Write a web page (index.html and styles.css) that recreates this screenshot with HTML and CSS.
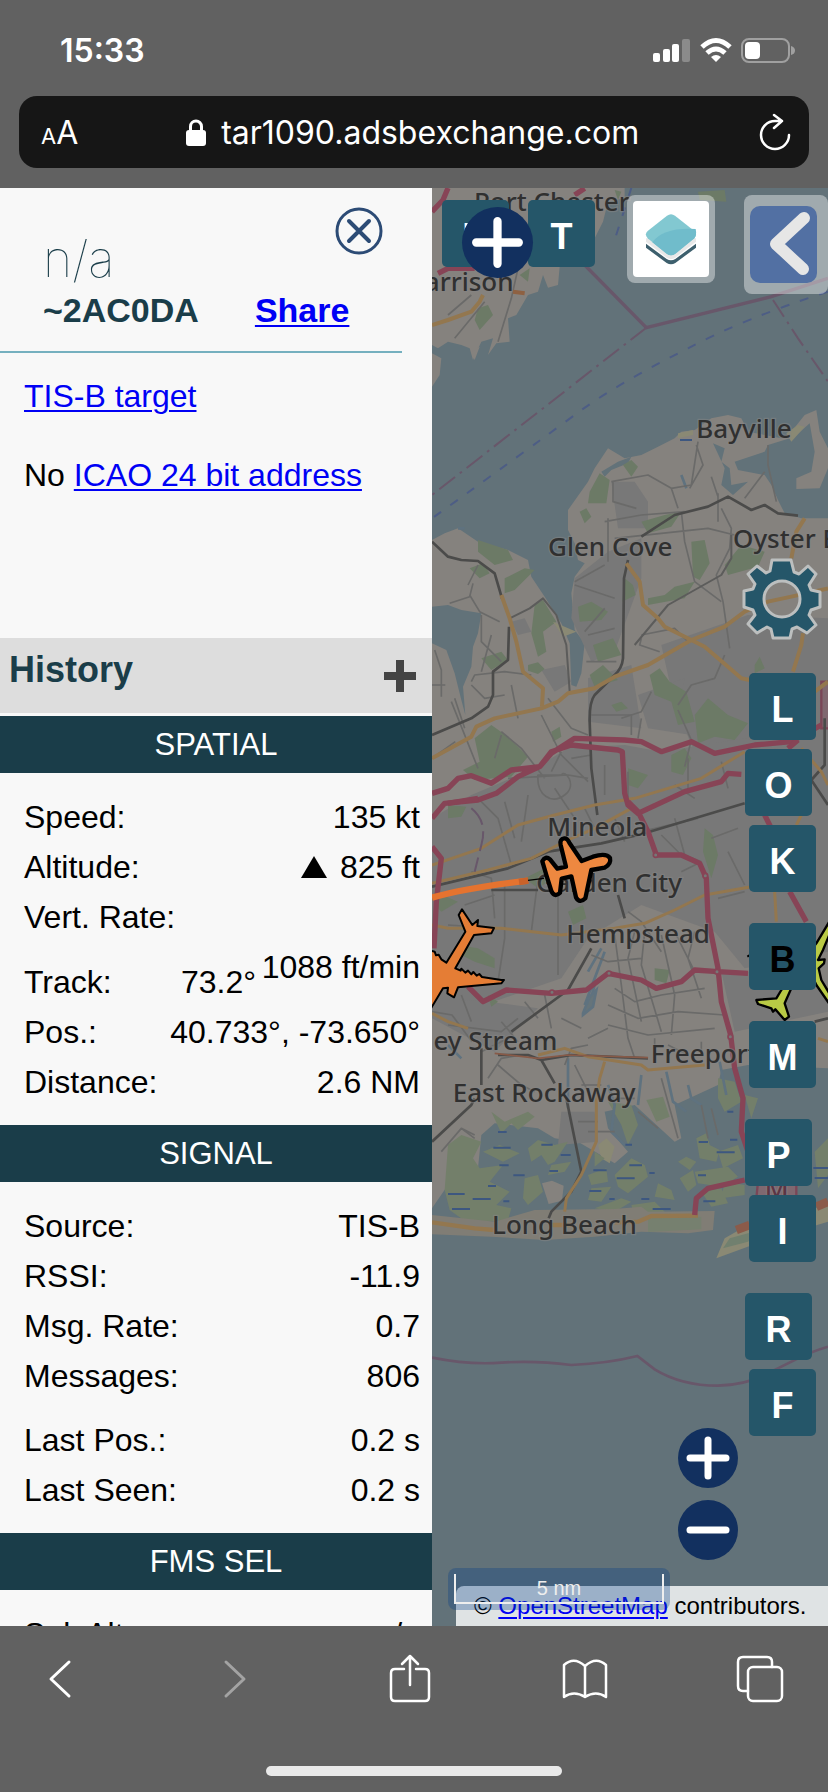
FILE: index.html
```html
<!DOCTYPE html>
<html lang="en">
<head>
<meta charset="utf-8">
<meta name="viewport" content="width=device-width, initial-scale=1">
<title>tar1090.adsbexchange.com</title>
<link rel="stylesheet" href="styles.css">
</head>
<body>
<header class="chrome-top">
  <div class="status">
    <time class="clock">15:33</time>
    <svg class="status-icons" viewBox="0 0 144 28" aria-hidden="true">
      <g fill="#fff">
        <rect x="1" y="17" width="7" height="9" rx="2"/>
        <rect x="11" y="13" width="7" height="13" rx="2"/>
        <rect x="20" y="8" width="7" height="18" rx="2"/>
        <rect x="30" y="3" width="8" height="23" rx="2" fill="#8b8b8b"/>
        <path d="M64 26l-5-5q5-4 10 0z"/>
      </g>
      <g fill="none" stroke="#fff" stroke-width="5">
        <path d="M50 11q14-13 28 0"/>
        <path d="M55 17q9-8 18 0"/>
      </g>
      <rect x="90" y="3" width="47" height="23" rx="7" fill="none" stroke="#a0a0a0" stroke-width="2"/>
      <rect x="93" y="6" width="15" height="17" rx="4" fill="#fff"/>
      <path d="M139 10q4 1 4 4.500t-4 4.500z" fill="#a0a0a0"/>
    </svg>
  </div>
  <div class="address-bar">
    <button class="bar-button text-size" aria-label="Text size"><small>A</small>A</button>
    <label class="address">
      <svg class="lock" viewBox="0 0 20 27" aria-label="Secure"><rect y="11" width="20" height="16" rx="3" fill="#fff"/><path d="M4.500 13V7.500a5.500 5.500 0 0 1 11 0V13" fill="none" stroke="#fff" stroke-width="3"/></svg>
      <input class="url" type="text" value="tar1090.adsbexchange.com" aria-label="Address">
    </label>
    <button class="bar-button" aria-label="Reload">
      <svg class="reload" viewBox="0 0 32 38" fill="none" stroke="#fff" stroke-width="2.500" stroke-linecap="round" stroke-linejoin="round"><path d="M30 22A14 14 0 1 1 16 8h7M15 2l8 6-8 7"/></svg>
    </button>
  </div>
</header>

<main class="content">
  <aside class="panel">
    <div class="ident">
      <h1 class="callsign">n/a</h1>
      <button class="close" aria-label="Close">
        <svg viewBox="0 0 48 48" fill="none" stroke="#2c4b75" stroke-width="3" stroke-linecap="round"><circle cx="24" cy="24" r="22"/><path d="M14 14l20 20M34 14L14 34" stroke-width="4"/></svg>
      </button>
      <div class="hex-row"><span class="hex">~2AC0DA</span><a class="share" href="#share">Share</a></div>
    </div>
    <div class="about">
      <p><a href="#tisb">TIS-B target</a></p>
      <p>No <a href="#icao">ICAO 24 bit address</a></p>
    </div>
    <div class="history">
      <h2>History</h2>
      <button class="expand" aria-label="Expand history"><svg viewBox="0 0 32 32"><path d="M16 0v32M0 16h32" stroke="#444" stroke-width="8"/></svg></button>
    </div>

    <h3 class="section-title">SPATIAL</h3>
    <dl class="facts">
      <div><dt>Speed:</dt><dd>135 kt</dd></div>
      <div><dt>Altitude:</dt><dd class="altitude"><svg class="climb" viewBox="0 0 26 22" aria-label="climbing"><path d="M13 0l13 22H0z"/></svg>825 ft</dd></div>
      <div class="vert-rate"><dt>Vert. Rate:</dt><dd>1088 ft/min</dd></div>
      <div class="track"><dt>Track:</dt><dd>73.2°</dd></div>
      <div><dt>Pos.:</dt><dd>40.733°, -73.650°</dd></div>
      <div><dt>Distance:</dt><dd>2.6 NM</dd></div>
    </dl>

    <h3 class="section-title">SIGNAL</h3>
    <dl class="facts">
      <div><dt>Source:</dt><dd>TIS-B</dd></div>
      <div><dt>RSSI:</dt><dd>-11.9</dd></div>
      <div><dt>Msg. Rate:</dt><dd>0.7</dd></div>
      <div><dt>Messages:</dt><dd>806</dd></div>
      <div class="spaced"><dt>Last Pos.:</dt><dd>0.2 s</dd></div>
      <div><dt>Last Seen:</dt><dd>0.2 s</dd></div>
    </dl>

    <h3 class="section-title">FMS SEL</h3>
    <dl class="facts">
      <div><dt>Sel. Alt.:</dt><dd>n/a</dd></div>
    </dl>
  </aside>

  <section class="map" aria-label="Map">
    <svg class="tiles" viewBox="12 9 1188 4314" preserveAspectRatio="xMinYMin slice">
      <rect x="12" y="9" width="1188" height="4314" fill="#627279"/>

      <!-- land -->
      <g fill="#85827e">
        <path d="M12 9H590V40L540 50 525 110 500 160 470 245 395 245 390 300 360 308 345 270 330 320 300 330 265 390 240 400 245 470 205 475 180 510 195 460 160 470 135 525 125 490 100 480 60 470 30 490 12 480Z"/>
        <path d="M12 505L40 520 35 570 12 605ZM130 500l25-15-15 40z"/>
        <path d="M12 1065L50 1045 90 1030 150 1070 240 1095 300 1125 310 1175 350 1235 400 1315 425 1375 430 1500 445 1505 460 1465 470 1375 440 1335 430 1225 440 1175 470 1135 450 1125 440 1075 420 1035 420 975 480 890 500 850 540 790 590 820 640 810 690 785 740 760 760 740 800 735 850 700 900 690 940 700 960 740 1060 760 1090 740 1130 690 1165 675 1175 740 1200 790V850L1175 910 1105 912 1105 880 1150 860 1160 800 1145 715 1100 755 1020 780 1010 800 920 830 930 855 1010 870 1030 900 1050 945 1070 985 1120 1000 1200 1000V2650L960 2640 880 2655 870 2700 740 2760 760 2860 740 2870 620 2760 530 2780 540 2830 600 2900 560 2935 450 2870 380 2860 330 2830 200 2815 160 2850 150 2950 60 3000 12 3070Z"/>
      </g>
      <g fill="#627279">
        <path d="M12 1265L60 1260 100 1275 160 1285 150 1345 135 1385 130 1445 105 1505 112 1590 100 1545 80 1465 55 1395 12 1375Z"/>
        <path d="M855 775L890 790 880 830 905 850 910 900 960 890 915 930 880 900 890 850ZM520 860l50-30 40-15-10 20-50 20-20 20z"/>
      </g>

      <!-- built-up areas -->
      <g fill="#787878">
        <path d="M540 1100L640 1060 640 1180 560 1400 490 1430 430 1300 440 1180ZM550 890h70l40 60v80h-90zM700 1380L960 1290 1200 1300 1200 1800 1000 1850 820 1750 740 1560Z"/>
        <path d="M12 1900L130 1830 320 1750 420 1690 590 1680 700 1700 950 1660 1200 1740V2300L950 2350 860 2240 640 2160 480 2260 400 2380 140 2470 12 2440Z"/>
        <path d="M12 2440L180 2450 330 2470 200 2600 12 2500ZM400 2780h100l10 90-120 10zM480 1480l130-40 30 190-160-20zM630 1530l140-50-20 110 40 60-130-20zM880 2360h140l180 60v60l-280 60z"/>
        <path d="M340 1455l70-15 20 50-50 30zM250 1310l40-10 20 40-40 10z"/>
      </g>

      <!-- parks -->
      <g fill="#6c7a66">
        <path d="M150 1065l90 30 15 30-55 15-50-40zM125 1150l40-15 20 30-30 15zM230 1180l60-30 30 5-60 60-30 10zM320 1260l25-15 40 65-40 30 10 60-25 15-20-70zM160 1420l60-20 20 25-50 30zM300 1440l30-8 20 20-20 15-30-10zM485 920l30-55 30 20-10 70h-55zM585 840l25-15 20 20-20 30zM590 1180l25 20 8 30-40 20zM660 1240l50-10 30-25 60-15-30 50-110 20zM890 1140l50-60 70 20-20 45-90 25zM790 1070l40-5 15 70-30 50-20-10zM640 1010l70-20 50-10-30 45-70 20zM450 1265l40-15 50 30-20 25-65 5zM495 1380l60-20 25 50-70 20zM485 1470l40-30 45 45-70 20z"/>
        <path d="M665 1470l30-20 30 40 50 30 25 90-50 10-20-70-50-20zM800 1590l40-50 60 50 60 25-40 50-60-10-50 20zM140 1660l50-40 50 35 60 60-50 60-110 10-35-30 50-25zM370 1640l25-15 5 30-25 15zM550 1560l30-10 20 20-35 10zM980 1440l15-25 15 35-30 15zM600 1750l60 20-30 40-30-10zM730 1710l40-20 20 30-25 50-35-10z"/>
        <path d="M90 2280l60 10 50 30v30l-60-20-40-20zM420 2180l45-20 10 40-40 20zM680 2350l45 5-10 40-35-10zM180 2430l30 20-20 15zM830 1930l25 20 15 60-20 70-25-80zM20 2120l70 30-50 30-20-20zM1010 2650l70 5 10 40-40 10zM290 2080l60-30 10 40-30 20zM60 1860l55 5-15 30-40 5z"/>
        <path d="M560 15l20 5-10 25zM810 20l80-5 5 35-80-5zM150 370l30-10 15 30-40 45-15-30zM275 270l30-20-5 40zM455 980l20-10 15 25-20 20z"/>
      </g>
      <g fill="#8a8974">
        <path d="M750 745l45-10v15l-45 10zM1075 745l35-25 20 5-40 45zM375 1310l70 30-40 15zM510 2880l25-20 25 25-15 50-25-15z"/>
      </g>

      <!-- salt marsh -->
      <g fill="#737f6a">
        <path d="M60 2880l40-30 60 20-25 50 20 30 70-10-40 50 60 30-40 40 45 10-10 35-120 10-55-40-15-60z"/>
        <path d="M190 2780l40 30 70-30 20 15-50 40-20-20-30 30zM300 2890l30-25 50 15 40-10-40 60-20 10-20-30-30 20zM290 2980l40-10 15 50-45 40-15-20zM165 2900l50-20 60 25-50 25zM500 2900l30 20-30 25zM370 2940l60-10-20 30-50 10zM480 2970l55-20 5 40-50 10zM560 2970l50-50 40 20 10 35-60 50-30-20zM490 3010l60-5-30 45-40-5zM500 3070l80-30 30 10-50 30zM610 3060l70-10 60 60-40-10-80-5zM750 2930l25-15 30 15-20 25zM755 2980l40-25 10 45-25 20zM805 2860l30-15 10 35 30 15-10 35-50-10zM870 2900l60-20 15 40-60 30zM800 2960l100-15 30 30-50 30-70-10zM820 3020l60-10 20 45-50 10zM690 2995l40 20 10 30-60-10zM540 2750l70 10 20 60-30 60-20-60zM655 2745l50-10 20 60-40 15zM870 2680l50 10 20 60-50 30-20-40zM1160 2900l40-40v110l-30 40zM950 2730l40 10-20 60zM890 2990l60 10v30l-70 10z"/>
      </g>
      <g stroke="#3d5780" stroke-width="6">
        <path d="M210 2841h26M196 2888h52M340 2879h34M398 2910h30M214 2941h28M180 3003h24M256 2971h34M60 3027h50M134 3042h54M226 3049h18M72 3072h54M364 2958h26M496 2956h40M484 3018h36M604 2941h38M566 2980h54M592 2879h20M544 3042h16M640 3042h24M674 3072h54M812 2871h28M866 2902h54M826 3049h36M810 2971h24M906 2864h22M664 2964h16M1156 2949h44M1160 2979h40M756 765h36M898 2780h18"/>
      </g>

      <!-- barrier beach -->
      <path d="M12 3090L200 3110 320 3075 560 3072 640 3065 660 3080 860 3078 855 3135 780 3145 640 3140 500 3155 350 3165 190 3155 12 3148Z" fill="#807d75"/>
      <path d="M660 3100l160-5v38l-160 8z" fill="#76806f"/>
      <path d="M342 2995l30-8 35 15-5 45-40 10z" fill="#85827e"/>
      <path d="M865 3220L890 3160 960 3120 1200 3060V3110L1000 3170Z" fill="#8a8974"/>
      <path d="M885 3190L905 3160 960 3145 1000 3140 960 3170Z" fill="#71806f"/>
      <path d="M990 2990h115v50H985z" fill="#806870" stroke="#7a4657" stroke-width="7"/>
      <path d="M1180 1490h40v140h-40z" fill="#806870" stroke="#7a4657" stroke-width="7"/>

      <!-- creeks -->
      <g fill="none" stroke="#5f727f" stroke-width="8">
        <path d="M520 2290l-40 70M500 2400l-20 70M530 2300l-60 160M420 2620v150M640 2670l-10 90M715 2660l20 90 40 30M780 2700l10 40 30 20M875 2630l20 100M60 2580l40 40M540 2700l20 60-10 80 40 40M760 870l15 40M110 1030h-20"/>
        <path d="M465 2485l20-50 20-20-10 50-30 25z" fill="#66747a"/>
      </g>

      <!-- streets -->
      <g fill="none" stroke="#6a6a69" stroke-width="5" stroke-linejoin="round">
        <path d="M550 890l110-20 70 40 20 60M555 890v60l70 20M730 910l60-10 20-130M805 780l20 60-40 70M1020 780v60l25 110M950 940l60-80M80 460l90-110M210 470l40-130 20-90M60 390l70-60M870 935l-20-60M870 925v85"/>
        <path d="M540 1000v130M530 1010l110-20 130-10M560 1060l280-30 80 20M760 980l10 90 30 120 80 60M880 970l30 60-5 60-40 80 20 80 20 140M440 1190l90-50M440 1200l120 40M470 1340l60-70M480 1350l80-20M475 1430h90M120 1200l30-60M125 1230l30 50 60 30M65 1255l60-20 10-40M160 1290v80l60 60M190 1350l-30 110M130 1490l10-20 90-10 80 10M130 1500l40 40 60-10M640 1350l100-20 40 40M640 1360l-5 20 60 20M750 1575l40 90-20 80M750 1560l40-60 70-20 30-70M580 1600l60-20 30-60M20 1395l20 60v80M12 1500h40M80 1540l30 90M70 1550l80 200"/>
        <path d="M250 1500l20 100M340 1590l60 120 80 80M360 1540l70 90 50 20M220 1640l60 50 70 90M12 1720l70-50M200 1720l20-70M240 1780l180-10 60 10M330 1770c-5 60 40 90 80 60s0-80-10-60zM490 1590h120v60M600 1760v80M530 1740v90M740 1800l60 40M780 1720v100M880 1730l20 80M640 1600l-10 60M400 1700l-30 60M430 1720l60-10"/>
        <path d="M150 1840l60 60 40 140M230 1850l30 110M300 1830l-20 140M380 1810l60 90M130 2060l60 20 10 120M230 2100v160l-20 130M330 2080l-20 160M390 2070v300M60 2220l150 10M110 2160l90-30M470 1870l30 60M560 1900l30 70M700 1950l60 60M740 1900l30 110 50 20M760 2060l60-30M640 1940l170-40M850 1960l80-30M870 2140l80-20M900 2000l50 100"/>
        <path d="M600 2180l40 30 60 90M560 2250l20 150 20 160M620 2240l-20 80 40 190M650 2240l-10 100 60 200M700 2250l40 180-10 120M740 2240l60 120M800 2240l-20 80 40 120M560 2410l60 40 80-20 130-20M540 2460l90 40 120-20 140 10M540 2520l120 30 200-20M480 2560l60-30M600 2560l20 60M680 2560v50M720 2580l60 30M820 2570v40M490 2310l50 20 100-10M100 2430l30 80M12 2480l60 10 60 80M220 2510l50 60M290 2450l40 50M350 2430l20 100M60 2520l160 20 50-40M400 2500l60 30M410 2640l20-50 50-10M160 2600l80-40M180 2680l40-60 60-10M210 2640l70 60 40 20M440 2640l40 80M460 2700h60M560 2740h60M700 2680l50 180M630 2780l60 50M820 2760l20 100M850 2770l20 80M450 2810h60M480 2840h80M40 2900l60-70 40 20M100 2830l40 30"/>
      </g>

      <!-- railways -->
      <g fill="none" stroke="#4b4b4a" stroke-width="8" stroke-linejoin="round">
        <path d="M12 1650L130 1600 180 1565 195 1530 195 1460 240 1425 243 1325M12 1070L60 1115 100 1125 150 1128 200 1165 222 1240M600 1125L588 1180 585 1420Q582 1450 560 1470L500 1530Q484 1550 485 1610L490 1750 508 1890M640 1055L740 990 840 965 900 935 970 975 1010 960 1050 985 1110 992"/>
        <path d="M12 2105L240 2050 360 2000 520 1975 650 1945 950 1855M250 2540L420 2415 490 2290M570 2130l20 70M160 2590v110M210 2610h90l40 15 90-15 230 10M340 2625l40 70M415 2740L460 2960 430 3020 370 3080 362 3100M12 2870L130 2760 140 2740M190 2115h140"/>
        <path d="M245 1300l60-30 40-30 40 50 30 90 10 140M620 1380l100-120 160-90 30-50V1050" stroke-width="6" stroke="#5c5c5b"/>
        <path d="M1200 2500L1160 2510M1190 1600V1740L1150 1785 1200 1860"/>
      </g>

      <!-- main roads -->
      <g fill="none" stroke="#93774f" stroke-width="12" stroke-linejoin="round">
        <path d="M12 420L60 405 130 380 155 350 165 330M12 1720L130 1655 145 1625 200 1600 340 1570 390 1550 420 1525 500 1510 560 1475 660 1440 790 1365 890 1325 950 1280 1020 1250 1090 1235 1200 1210M220 1230L245 1300 265 1370 285 1460 345 1510 342 1565M595 1135L635 1190 645 1260 690 1300 710 1325 790 1365 830 1385 940 1480 965 1485M1130 1000L1105 1040 1090 1120M1125 1345L1120 1380 1095 1460M1200 1490L1160 1520"/>
        <path d="M12 2040L160 1990 270 1920 380 1890 500 1860 620 1840 820 1780 950 1700M12 2095L180 2055 310 2020 420 1965 500 1930 610 1870M12 2220L60 2230 220 2230 400 2250 560 2230 650 2215 740 2175 830 2130 1000 2100M1120 1890L1105 1920M1040 2120L1045 2210M1120 1690l60 70 20 40M12 2485L60 2510 120 2530M330 2610L410 2590 480 2615 640 2640 660 2655 830 2640M530 2630L515 2680 505 2750 505 2870 460 2970 415 3040 410 3080M1170 2560l30 10" stroke-width="9"/>
        <path d="M12 3112L140 3130 200 3135M560 3112L630 3110 670 3093 810 3092M370 3120h60" stroke-width="13"/>
        <path d="M255 320L290 325" stroke="#8e6142"/>
        <path d="M200 2605l130 15 90-10 240 8" stroke="#875a48" stroke-width="5"/>
        <path d="M925 3135L965 3120M1165 3065L1200 3050" stroke="#8b5b4a" stroke-width="26"/>
      </g>

      <!-- motorways -->
      <g fill="none" stroke="#874456" stroke-width="16" stroke-linejoin="round">
        <path d="M12 80L45 45 60 9M30 265L60 250 140 250M440 30l30-20M12 1825L60 1810 90 1780 130 1772 190 1795 250 1755 335 1745 370 1705 440 1660 590 1665 640 1670 700 1700 790 1670 860 1705 980 1680 1090 1670 1180 1620M12 1900L50 1855 150 1845 205 1825 270 1775 335 1745 370 1700 430 1680 570 1695 583 1700 590 1825 600 1860 630 1885 770 1820 880 1790 900 1765 940 1768"/>
        <path d="M12 1985L40 2020 25 2150 18 2290M120 2405L165 2450 235 2415 370 2425 475 2415 540 2365 640 2385 685 2410 760 2390 800 2355 870 2360 960 2365M600 1850L630 1880 660 1940 685 2010 760 2010 815 2035 835 2080 840 2200 870 2350 880 2450 908 2550 920 2650 945 2740 940 2840 960 2900M1010 1890L1030 1930M1085 2120L1135 2210M950 2985L840 3010 805 3040 800 3090M60 1855L150 1840M1080 1690l30-25"/>
      </g>
      <g fill="#777" stroke="#874456" stroke-width="5"><circle cx="683" cy="2010" r="7"/><circle cx="832" cy="2072" r="7"/><circle cx="867" cy="2360" r="7"/><circle cx="543" cy="2365" r="7"/><circle cx="372" cy="2422" r="7"/><circle cx="907" cy="2555" r="7"/></g>

      <!-- boundaries and ferry routes -->
      <g fill="none" stroke="#68576a" stroke-width="8">
        <path d="M470 240L655 428 1030 335 1200 280" stroke-width="10"/>
        <path d="M655 428L12 930" stroke-dasharray="60 18 8 18" stroke-width="6"/>
        <path d="M1035 345L1110 460 1200 590" stroke-dasharray="60 18 8 18" stroke-width="6"/>
        <path d="M12 3518Q120 3540 220 3533T430 3540Q540 3535 628 3513L680 3553Q760 3602 870 3602 960 3600 1030 3560L1110 3520Q1150 3500 1200 3485"/>
        <path d="M130 1870q50 40 30 110l-20 80" stroke-width="6" stroke-dasharray="60 20"/>
      </g>
      <g fill="none" stroke="#4d5d85" stroke-width="6" stroke-dasharray="27 34">
        <path d="M1200 320Q950 400 780 490 560 600 440 690 180 880 12 1000"/>
        <path d="M610 9L555 180"/>
      </g>

      <!-- place names -->
      <g class="places">
        <text x="138" y="78">Port Chester</text>
        <text x="-68" y="318">Harrison</text>
        <text x="805" y="758">Bayville</text>
        <text x="360" y="1112">Glen Cove</text>
        <text x="915" y="1090">Oyster Bay</text>
        <text x="358" y="1952">Mineola</text>
        <text x="325" y="2122">Garden City</text>
        <text x="415" y="2273">Hempstead</text>
        <text x="-117" y="2595">Valley Stream</text>
        <text x="668" y="2635">Freeport</text>
        <text x="74" y="2750">East Rockaway</text>
        <text x="192" y="3147">Long Beach</text>
        <text x="1010" y="3040" fill="#5c3544">M</text>
      </g>

      <!-- aircraft -->
      <g transform="translate(0 1845)" stroke="#000" stroke-linejoin="round">
        <path d="M12 293Q120 262 300 242" fill="none" stroke="#e5732f" stroke-width="19"/>
        <path d="M273 246l28-4" fill="none" stroke="#c9622a" stroke-width="19"/>
        <path d="M300 241l48-6" stroke-width="4"/>
        <path d="M409 115Q394 117 398 135L414 200 388 206 366 178Q352 166 343 184L355 225 370 273Q380 294 396 278L401 236 430 229 444 292Q455 312 472 295L490 210 530 203Q550 192 546 174 535 158 495 170L461 183 424 128Q418 114 409 115Z" fill="#ee8840" stroke-width="13"/>
        <path d="M102 328L133 375 150 360 148 378 198 384 190 400 138 405 82 505 98 512 100 506 112 518 120 512 130 523 136 516 146 527 154 522 162 531 220 540 228 540 220 550 90 562 78 592 58 580 60 563 45 565 0 640V450L20 455 24 466 32 464 40 478 55 488 112 395 92 345Z" fill="#e57d35" stroke-width="6"/>
        <path d="M985 600L1045 595 1060 570 1165 430 1210 355V390L1185 450 1170 480 1190 478 1188 490 1172 505 1180 540 1210 590V620L1165 555 1140 500 1090 565 1070 610 1083 650 1070 660 1042 628 1035 635 1030 625 990 612Z" fill="#b9ca45" stroke-width="7"/>
        <path d="M958 470l16-10" stroke-width="6"/>
      </g>
    </svg>

    <div class="map-top">
      <button class="key">U</button>
      <button class="key">T</button>
      <span class="layers"><button aria-label="Layers">
        <svg viewBox="0 0 156 156"><path d="M3 92v12l62 46q13 8 26 0l62-46V92l-62 46q-13 8-26 0z" fill="#3d5f6d"/><path d="M3 76v10l62 48q13 8 26 0l62-48V76z" fill="#e8e8e8"/><path d="M66 8q12-9 24 0l58 46q10 10 0 22L91 122q-13 10-26 0L8 76Q-3 64 8 54z" fill="#82c8d1"/><path d="M22 88Q55 42 152 48q4 18-4 28L91 122q-13 10-26 0z" fill="#70bccb"/></svg>
      </button></span>
      <span class="drawer"><button aria-label="Expand sidebar">
        <svg viewBox="0 0 67 77" fill="none" stroke="#e6e6e6" stroke-width="12" stroke-linecap="round" stroke-linejoin="round"><path d="M54 12L26 38 53 63"/></svg>
      </button></span>
    </div>
    <button class="round add" aria-label="Add"><svg viewBox="0 0 60 60"><path d="M30 12v36M12 30h36"/></svg></button>

    <button class="gear" aria-label="Settings">
      <svg viewBox="-40 -41 80 82">
        <path fill="#255669" fill-rule="evenodd" stroke="#bcbfbf" stroke-width="3" stroke-linejoin="round" d="M-10 -39H9L12 -27 17 -25 26 -33 34 -25 27 -14 29 -9 38 -7V8L29 11 27 16 34 26 25 34 15 28 10 30 8 39H-9L-11 30 -15 28 -25 34 -34 25 -27 16 -29 11 -38 8V-8L-29 -10 -27 -15 -34 -25 -25 -33 -16 -26 -12 -28ZM0 -18A18 18 0 1 0 0 18 18 18 0 1 0 0 -18Z"/>
      </svg>
    </button>

    <div class="rail">
      <div class="rail-group"><button class="key">L</button><button class="key inset">O</button><button class="key">K</button></div>
      <div class="rail-group"><button class="key dark">B</button></div>
      <div class="rail-group"><button class="key">M</button></div>
      <div class="rail-group"><button class="key inset">P</button><button class="key">I</button></div>
      <div class="rail-group"><button class="key inset">R</button><button class="key">F</button></div>
    </div>

    <div class="zoom">
      <button class="round" aria-label="Zoom in"><svg viewBox="0 0 60 60"><path d="M30 12v36M12 30h36"/></svg></button>
      <button class="round" aria-label="Zoom out"><svg viewBox="0 0 60 60"><path d="M12 30h36"/></svg></button>
    </div>

    <div class="attribution">© <a href="#osm">OpenStreetMap</a> contributors.</div>
    <div class="scale"><div class="scale-line">5 nm</div></div>
  </section>
</main>

<footer class="chrome-bottom">
  <nav class="toolbar">
    <button aria-label="Back"><svg viewBox="0 0 48 52"><path d="M33 9L15 26l18 17" stroke-width="3"/></svg></button>
    <button aria-label="Forward" disabled><svg viewBox="0 0 48 52"><path d="M15 9l18 17-18 17" stroke-width="3"/></svg></button>
    <button aria-label="Share"><svg viewBox="0 0 48 52"><path d="M18 16h-9q-4 0-4 4v24q0 4 4 4h30q4 0 4-4V20q0-4-4-4h-9M24 32V3M16 11l8-8 8 8"/></svg></button>
    <button aria-label="Bookmarks"><svg viewBox="0 0 48 52"><path d="M24 13Q13 3 3 12v32q10-7 21 0 11-7 21 0V12Q35 3 24 13zv31"/></svg></button>
    <button aria-label="Tabs"><svg viewBox="0 0 48 52"><path d="M12 38H7q-5 0-5-5V9q0-5 5-5h24q5 0 5 5v5"/><rect x="12" y="14" width="34" height="34" rx="5"/></svg></button>
  </nav>
  <div class="home-bar"></div>
</footer>
</body>
</html>
```
FILE: styles.css
```css
* { box-sizing: border-box; }

body {
  margin: 0;
  height: 100vh;
  display: flex;
  flex-direction: column;
  background: #616161;
  font-family: "Liberation Sans", Arial, sans-serif;
  font-size: 32px;
  color: #000;
}

button {
  margin: 0;
  padding: 0;
  border: 0;
  background: none;
  font: inherit;
  color: inherit;
}

svg { display: block; }
h1, h2, h3, p, dl, dd { margin: 0; font-weight: inherit; }
a { color: #0000f5; text-underline-offset: 3px; text-decoration-thickness: 2px; }

/* browser chrome */
.chrome-top { flex: none; padding-bottom: 20px; color: #fff; font-family: Inter, sans-serif; }
.status {
  height: 96px;
  padding: 4px 32px 0 60px;
  display: flex;
  align-items: center;
  justify-content: space-between;
}
.clock { font-size: 32px; font-weight: 600; }
.status-icons { width: 144px; height: 28px; }

.address-bar {
  height: 72px;
  margin: 0 19px;
  padding: 0 18px 0 22px;
  border-radius: 18px;
  background: #161616;
  display: flex;
  align-items: center;
  justify-content: space-between;
}
.text-size { font-size: 32px; }
.text-size small { font-size: 22px; }
.address { display: flex; align-items: center; gap: 15px; }
.lock { width: 20px; height: 27px; }
.url {
  width: 430px;
  padding: 0;
  border: 0;
  background: none;
  color: #fff;
  font: 32px Inter, sans-serif;
}
.reload { width: 32px; height: 38px; }

/* page */
.content {
  flex: 1;
  min-height: 0;
  display: grid;
  grid-template-columns: 432px 1fr;
  grid-template-rows: 100%;
}

.panel { overflow: hidden; background: #f8f8f8; }

.ident {
  position: relative;
  width: 402px;
  padding: 40px 0 21px 43px;
  border-bottom: 2px solid #75b0bf;
  color: #1a3d49;
}
.callsign { font: 100 50px/62px Inter, sans-serif; }
.close { position: absolute; top: 19px; right: 19px; width: 48px; height: 48px; }
.hex-row { display: flex; gap: 56px; font-size: 34px; font-weight: bold; line-height: 40px; }

.about { height: 285px; padding: 24px 24px 0; line-height: 39px; }
.about p + p { margin-top: 40px; }

.history {
  height: 75px;
  margin-bottom: 3px;
  padding: 0 16px 0 9px;
  background: #ddd;
  display: flex;
  justify-content: space-between;
  align-items: center;
}
.history h2 { color: #1a3d49; font-size: 36px; font-weight: bold; line-height: 64px; align-self: flex-start; }
.expand { width: 32px; height: 32px; }

.section-title {
  background: #1a3d49;
  color: #fff;
  font-size: 31px;
  line-height: 57px;
  text-align: center;
}

.facts { padding: 19px 12px 18px 24px; line-height: 50px; }
.facts > div { display: flex; justify-content: space-between; height: 50px; }
.facts .altitude { display: flex; align-items: center; gap: 13px; }
.climb { width: 26px; height: 22px; }
.facts > .vert-rate { height: 65px; }
.vert-rate dd { margin-top: 50px; }
.track dd { margin-right: 164px; }
.facts > .spaced { margin-top: 14px; }

/* map */
.map { position: relative; overflow: hidden; background: #627279; }
.tiles { width: 100%; height: 100%; }
.places {
  font-family: "Noto Sans", sans-serif;
  font-size: 78px;
  font-weight: 500;
  fill: #303030;
  stroke: #85858588;
  stroke-width: 8px;
  paint-order: stroke;
}

.key {
  width: 67px;
  height: 67px;
  padding-top: 7px;
  border-radius: 5px;
  background: #255669;
  color: #fff;
  font-size: 36px;
  font-weight: bold;
  line-height: 60px;
}
.key.dark { color: #000; }

.map-top {
  position: absolute;
  top: 7px;
  left: 10px;
  right: 0;
  display: flex;
  align-items: flex-start;
}
.map-top .key { margin: 5px 19px 0 0; }
.layers {
  margin-left: 13px;
  padding: 6px;
  border-radius: 8px;
  background: #ffffff66;
}
.layers button {
  display: grid;
  place-items: center;
  width: 76px;
  height: 76px;
  border-radius: 4px;
  background: #fff;
}
.layers svg { width: 52px; height: 52px; }
.drawer {
  margin-left: auto;
  padding: 11px 11px 11px 6px;
  border-radius: 8px;
  background: #ffffff66;
}
.drawer button { display: block; width: 67px; height: 77px; border-radius: 10px; background: #5270a3; }

.round { display: block; width: 60px; height: 60px; border-radius: 50%; background: #12305f; }
.round path { fill: none; stroke: #fff; stroke-width: 7; stroke-linecap: round; }
.add { position: absolute; top: 19px; left: 30px; width: 71px; height: 71px; }

.gear { position: absolute; top: 370px; right: 6px; width: 80px; height: 82px; }

.rail {
  position: absolute;
  top: 485px;
  right: 12px;
  display: flex;
  flex-direction: column;
  gap: 31px;
}
.rail-group { display: flex; flex-direction: column; align-items: flex-end; gap: 9px; }
.inset { margin-right: 4px; }

.zoom {
  position: absolute;
  right: 90px;
  bottom: 66px;
  display: flex;
  flex-direction: column;
  gap: 12px;
}

.attribution {
  position: absolute;
  left: 24px;
  right: 0;
  bottom: 0;
  height: 40px;
  padding-left: 18px;
  border-top-left-radius: 8px;
  background: #ffffffcc;
  font-size: 24px;
  line-height: 40px;
  white-space: nowrap;
}
.scale {
  position: absolute;
  left: 16px;
  bottom: 16px;
  width: 222px;
  height: 42px;
  padding: 6px;
  border-radius: 8px;
  background: #003c884d;
}
.scale-line {
  height: 30px;
  border: 2px solid #eee;
  border-top: 0;
  color: #eee;
  font-size: 20px;
  line-height: 28px;
  text-align: center;
}

.chrome-bottom { flex: none; height: 166px; }
.toolbar { display: flex; justify-content: space-between; padding: 27px 44px 0 36px; }
.toolbar svg {
  width: 48px;
  height: 52px;
  fill: none;
  stroke: #fff;
  stroke-width: 2.5;
  stroke-linecap: round;
  stroke-linejoin: round;
}
.toolbar button:disabled svg { stroke: #a3a3a3; }
.home-bar { width: 296px; height: 10px; margin: 61px auto 0; border-radius: 5px; background: #e9e9e9; }
```
